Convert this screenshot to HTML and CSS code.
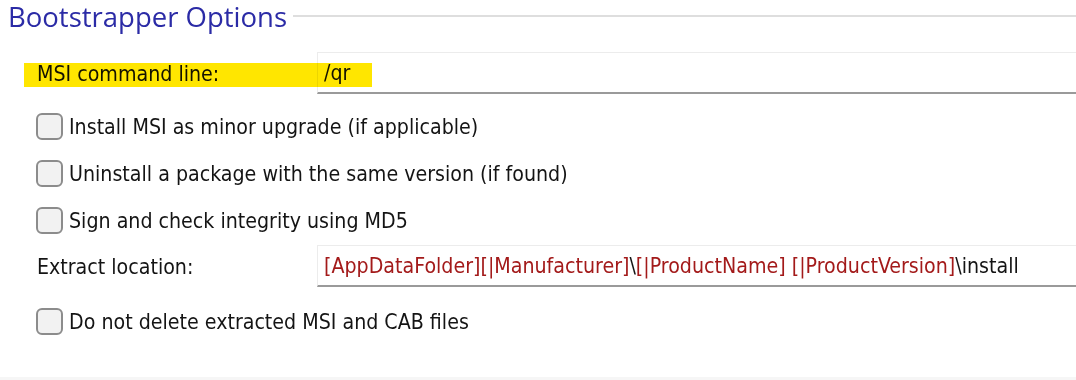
FILE: index.html
```html
<!DOCTYPE html>
<html lang="en">
<head>
<meta charset="utf-8">
<title>Bootstrapper Options</title>
<link rel="stylesheet" href="styles.css">
</head>
<body>
<div class="panel">
  <div class="header">
    <h1 class="title">Bootstrapper Options</h1>
    <div class="rule"></div>
  </div>
  <div class="form">
    <div class="field field-first">
      <span class="highlight"></span>
      <span class="label">MSI command line:</span>
      <div class="input"><span class="value">/qr</span></div>
    </div>
    <label class="check check-first"><span class="box"></span><span class="check-text">Install MSI as minor upgrade (if applicable)</span></label>
    <label class="check"><span class="box"></span><span class="check-text">Uninstall a package with the same version (if found)</span></label>
    <label class="check"><span class="box"></span><span class="check-text">Sign and check integrity using MD5</span></label>
    <div class="field field-extract">
      <span class="label">Extract location:</span>
      <div class="input"><span class="value"><span class="prop">[AppDataFolder][|Manufacturer]</span>\<span class="prop">[|ProductName] [|ProductVersion]</span>\install</span></div>
    </div>
    <label class="check check-last"><span class="box"></span><span class="check-text">Do not delete extracted MSI and CAB files</span></label>
  </div>
</div>
</body>
</html>
```
FILE: styles.css
```css
html, body {
  margin: 0;
  padding: 0;
}
body {
  background: #f6f6f6;
  width: 1076px;
  height: 380px;
  overflow: hidden;
  font-family: "DejaVu Sans Condensed", "DejaVu Sans", sans-serif;
  font-size: 21.2px;
  color: #141414;
}
.panel {
  background: #ffffff;
  height: 377px;
  display: flex;
  flex-direction: column;
}
.header {
  display: flex;
  align-items: flex-start;
  height: 34px;
  padding-left: 8px;
}
.title {
  margin: 0;
  font-family: "Open Sans", "Noto Sans", sans-serif;
  font-weight: normal;
  font-size: 27.5px;
  line-height: 34px;
  color: #2b2ba6;
  white-space: nowrap;
}
.rule {
  flex: 1;
  margin-left: 6px;
  margin-top: 15px;
  border-top: 2px solid #dedede;
}
.form {
  display: flex;
  flex-direction: column;
  padding-top: 18px;
}
.field {
  position: relative;
  display: grid;
  grid-template-columns: 280px 1fr;
  align-items: center;
  height: 42px;
  padding-left: 37px;
}
.input {
  height: 100%;
  box-sizing: border-box;
  border-top: 1px solid #ececec;
  border-left: 1px solid #ececec;
  border-bottom: 2px solid #9a9a9a;
  display: flex;
  align-items: center;
  padding-left: 6px;
  white-space: nowrap;
}
.prop {
  color: #a31a1a;
}
.highlight {
  position: absolute;
  left: 24px;
  top: 11px;
  width: 348px;
  height: 24px;
  background: #ffe600;
  mix-blend-mode: multiply;
  pointer-events: none;
}
.field-extract {
  margin-top: 1px;
}
.check {
  display: flex;
  align-items: center;
  height: 47px;
  padding-left: 36px;
  gap: 6px;
}
.check-first {
  margin-top: 9px;
}
.check-last {
  margin-top: 11px;
}
.box {
  box-sizing: border-box;
  width: 27px;
  height: 27px;
  border: 2px solid #8c8c8c;
  border-radius: 6px;
  background: #f2f2f2;
  flex: none;
}
```
